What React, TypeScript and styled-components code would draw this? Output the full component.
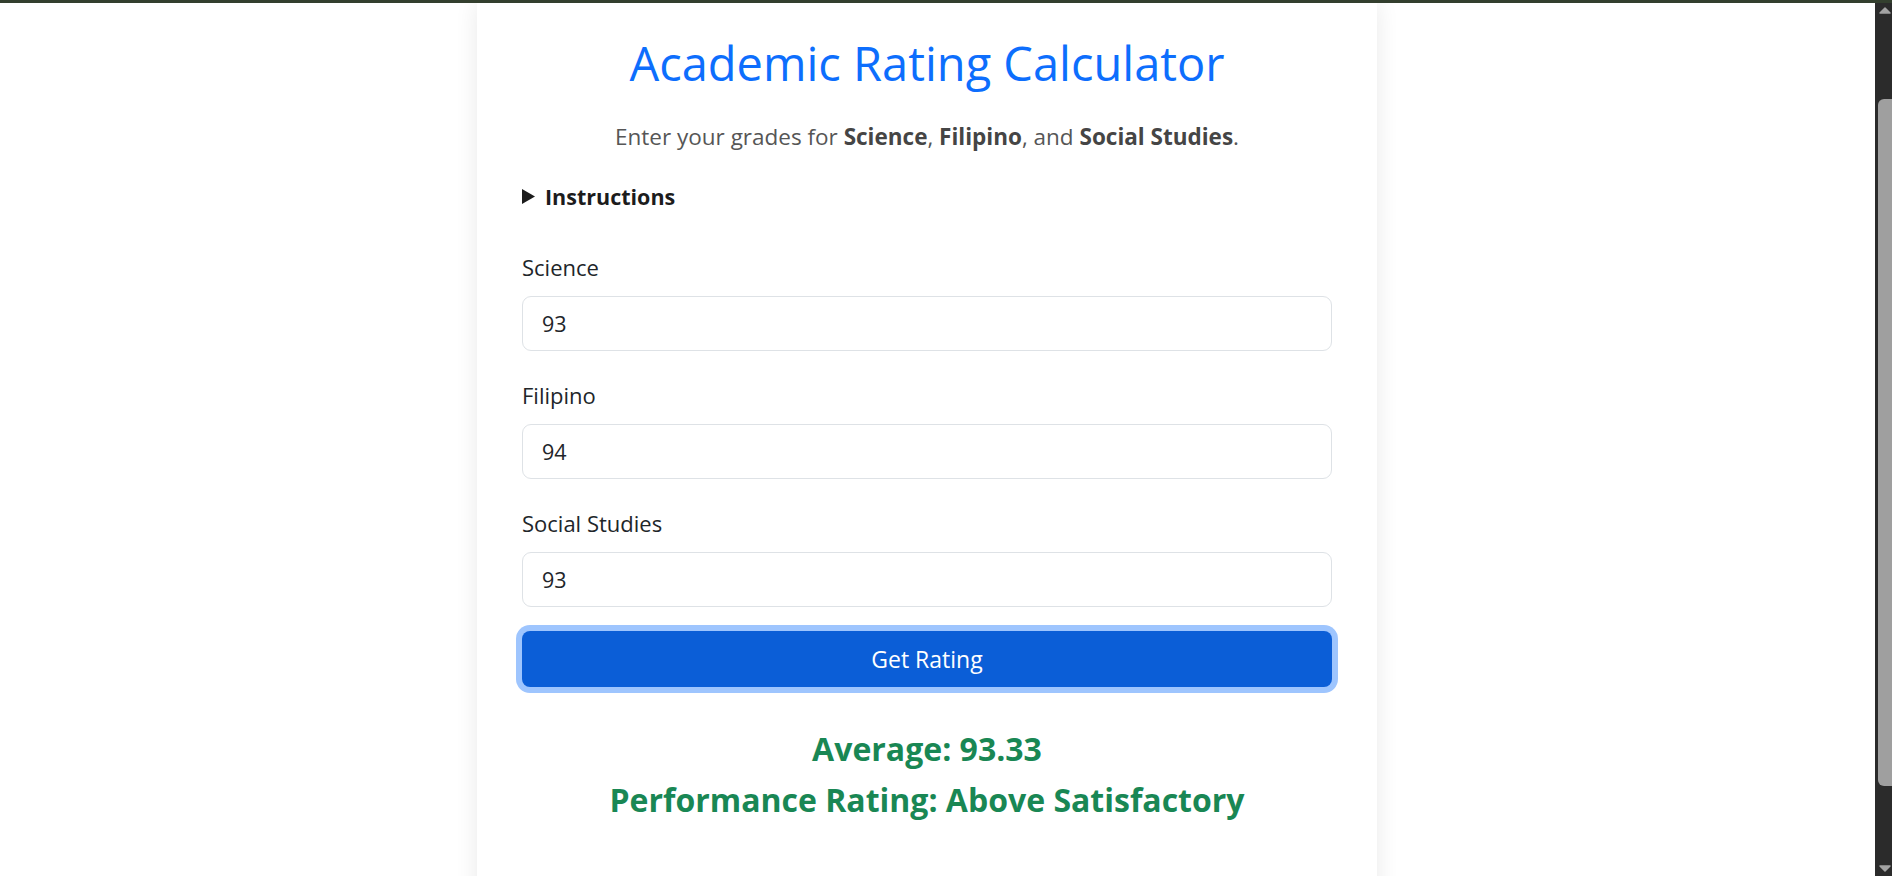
import React from "react";
import styled, { createGlobalStyle } from "styled-components";

const Global = createGlobalStyle`
  html, body { margin: 0; padding: 0; background: #ffffff; overflow: hidden; }
  * { box-sizing: border-box; }
`;

const Frame = styled.div`
  display: flex;
  flex-direction: column;
  width: 1892px;
  height: 876px;
  overflow: hidden;
  font-family: "Open Sans", "Noto Sans", sans-serif;
  color: #212529;
`;

const TopBar = styled.div`
  height: 3px;
  flex: none;
  background: #333f2e;
`;

const Body = styled.div`
  flex: 1;
  display: flex;
  min-height: 0;
`;

const Main = styled.main`
  flex: 1;
  display: flex;
  justify-content: center;
  padding-right: 21px;
  overflow: hidden;
`;

const Card = styled.section`
  width: 900px;
  min-height: 1000px;
  flex: none;
  background: #ffffff;
  box-shadow: 0 0 22px rgba(0, 0, 0, 0.09);
  padding: 32px 45px 60px;
  display: flex;
  flex-direction: column;
`;

const Title = styled.h1`
  margin: 0;
  font-size: 47px;
  line-height: 56px;
  font-weight: 400;
  color: #0d6efd;
  text-align: center;
`;

const Subtitle = styled.p`
  margin: 29px 0 0;
  font-size: 22.5px;
  line-height: 33px;
  color: #565656;
  text-align: center;
  b { font-weight: 700; color: #454545; }
`;

const Details = styled.details`
  margin-top: 27px;
`;

const Summary = styled.summary`
  font-size: 21.5px;
  line-height: 33px;
  font-weight: 700;
  color: #1c1c1c;
  cursor: pointer;
  list-style: none;
  display: flex;
  align-items: center;
  gap: 10px;
  &::-webkit-details-marker { display: none; }
`;

const Marker = styled.svg`
  width: 13px;
  height: 15px;
  flex: none;
`;

const Form = styled.form`
  display: flex;
  flex-direction: column;
  gap: 28px;
  margin-top: 38px;
`;

const Field = styled.div`
  display: flex;
  flex-direction: column;
  gap: 12px;
`;

const Label = styled.label`
  font-size: 22px;
  line-height: 33px;
  color: #212529;
`;

const Input = styled.input`
  height: 55px;
  width: 100%;
  border: 1.5px solid #dee2e6;
  border-radius: 9px;
  padding: 0 19px;
  font-family: inherit;
  font-size: 21.5px;
  color: #212529;
  background: #ffffff;
  outline: none;
`;

const Button = styled.button`
  margin-top: -4px;
  height: 56px;
  width: 100%;
  border: none;
  border-radius: 8px;
  background: #0b5ed7;
  color: #ffffff;
  font-family: inherit;
  font-size: 23px;
  box-shadow: 0 0 0 6px #9ec5fe;
  cursor: pointer;
`;

const Results = styled.div`
  margin-top: 36px;
  display: flex;
  flex-direction: column;
  align-items: center;
`;

const ResultLine = styled.h3`
  margin: 0;
  font-size: 32px;
  line-height: 51px;
  font-weight: 700;
  color: #198754;
`;

const Scrollbar = styled.div`
  width: 17px;
  flex: none;
  background: #2b2b2b;
  display: flex;
  flex-direction: column;
  align-items: flex-end;
  padding: 2px 0 2px 3px;
`;

const Arrow = styled.svg`
  width: 14px;
  height: 10px;
  flex: none;
`;

const Track = styled.div`
  flex: 1;
  width: 100%;
  display: flex;
  flex-direction: column;
  padding: 84px 0 78px;
`;

const Thumb = styled.div`
  flex: 1;
  width: 100%;
  background: #9f9f9f;
  border-radius: 6px 0 0 6px;
`;

const fields = [
  { id: "science", label: "Science", value: "93" },
  { id: "filipino", label: "Filipino", value: "94" },
  { id: "social", label: "Social Studies", value: "93" },
];

export default function App() {
  return (
    <>
      <Global />
      <Frame>
        <TopBar />
        <Body>
          <Main>
            <Card>
              <Title>Academic Rating Calculator</Title>
              <Subtitle>
                Enter your grades for <b>Science</b>, <b>Filipino</b>, and <b>Social Studies</b>.
              </Subtitle>
              <Details>
                <Summary>
                  <Marker viewBox="0 0 13 15">
                    <polygon points="0,0 13,7.5 0,15" fill="#1c1c1c" />
                  </Marker>
                  Instructions
                </Summary>
              </Details>
              <Form onSubmit={(e) => e.preventDefault()}>
                {fields.map((f) => (
                  <Field key={f.id}>
                    <Label htmlFor={f.id}>{f.label}</Label>
                    <Input id={f.id} type="number" defaultValue={f.value} />
                  </Field>
                ))}
                <Button type="submit">Get Rating</Button>
              </Form>
              <Results>
                <ResultLine>Average: 93.33</ResultLine>
                <ResultLine>Performance Rating: Above Satisfactory</ResultLine>
              </Results>
            </Card>
          </Main>
          <Scrollbar>
            <Arrow viewBox="0 0 14 10">
              <path d="M2 8 L7 3 L12 8 Z" fill="#a3a3a3" stroke="#a3a3a3" strokeLinejoin="round" strokeWidth="1.5" />
            </Arrow>
            <Track>
              <Thumb />
            </Track>
            <Arrow viewBox="0 0 14 10">
              <path d="M2 2 L7 7 L12 2 Z" fill="#a3a3a3" stroke="#a3a3a3" strokeLinejoin="round" strokeWidth="1.5" />
            </Arrow>
          </Scrollbar>
        </Body>
      </Frame>
    </>
  );
}
